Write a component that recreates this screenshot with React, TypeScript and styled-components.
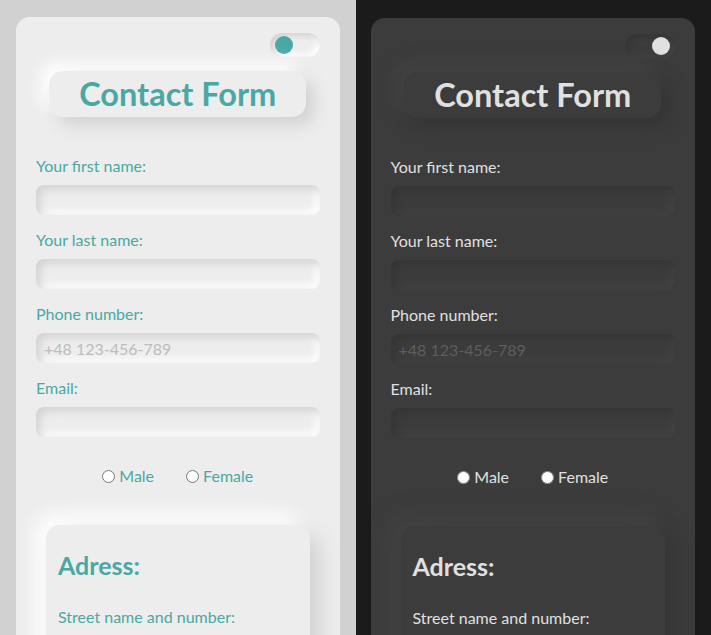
import React from 'react';
import styled, { createGlobalStyle, ThemeProvider } from 'styled-components';

type Theme = {
  page: string;
  card: string;
  text: string;
  shadowDark: string;
  shadowLight: string;
  placeholder: string;
  knob: string;
  on: boolean;
};

const light: Theme = {
  page: '#d1d1d1',
  card: '#ededed',
  text: '#4aa8a4',
  shadowDark: '#d2d2d2',
  shadowLight: '#ffffff',
  placeholder: '#bcbcbc',
  knob: '#4aa8a4',
  on: false,
};

const dark: Theme = {
  page: '#1b1b1b',
  card: '#3c3c3c',
  text: '#e0e0e0',
  shadowDark: '#353535',
  shadowLight: '#434343',
  placeholder: '#5e5e5e',
  knob: '#e0e0e0',
  on: true,
};

const Global = createGlobalStyle`
  html, body { margin: 0; padding: 0; }
  body { font-family: Lato, "Open Sans", sans-serif; }
  * { box-sizing: border-box; }
`;

const Page = styled.div`
  display: grid;
  grid-template-columns: 1fr 1fr;
  min-height: 100vh;
`;

const Half = styled.div`
  background: ${(p) => (p.theme as Theme).page};
  padding: ${(p) => ((p.theme as Theme).on ? '18px 16px 0 15px' : '17px 16px 0')};
`;

const Card = styled.div`
  background: ${(p) => (p.theme as Theme).card};
  border-radius: 14px;
  padding: 16px 20px 40px;
  display: flex;
  flex-direction: column;
`;

const Toggle = styled.div`
  align-self: flex-end;
  width: 50px;
  height: 24px;
  border-radius: 12px;
  padding: 0 5px;
  display: flex;
  align-items: center;
  justify-content: ${(p) => ((p.theme as Theme).on ? 'flex-end' : 'flex-start')};
  box-shadow: inset 3px 3px 6px ${(p) => (p.theme as Theme).shadowDark},
    inset -3px -3px 6px ${(p) => (p.theme as Theme).shadowLight};
`;

const Knob = styled.span`
  width: 18px;
  height: 18px;
  border-radius: 50%;
  background: ${(p) => (p.theme as Theme).knob};
`;

const TitleBox = styled.div`
  align-self: center;
  margin-top: 14px;
  height: 46px;
  padding: 0 30px;
  border-radius: 14px;
  box-shadow: 8px 8px 16px ${(p) => (p.theme as Theme).shadowDark},
    -8px -8px 16px ${(p) => (p.theme as Theme).shadowLight};
`;

const Title = styled.h1`
  margin: 0;
  font-size: 32.5px;
  line-height: 46px;
  font-weight: 700;
  color: ${(p) => (p.theme as Theme).text};
`;

const Fields = styled.div`
  margin-top: 40px;
  display: flex;
  flex-direction: column;
`;

const Label = styled.label`
  display: block;
  font-size: 16px;
  line-height: 18px;
  margin-bottom: 10px;
  color: ${(p) => (p.theme as Theme).text};
`;

const Input = styled.input`
  display: block;
  width: 100%;
  height: 30px;
  border: none;
  outline: none;
  border-radius: 8px;
  padding: 0 8px;
  margin: 0 0 16px;
  font-family: Lato, sans-serif;
  font-size: 16px;
  background: ${(p) => (p.theme as Theme).card};
  color: ${(p) => (p.theme as Theme).text};
  box-shadow: inset 4px 4px 8px ${(p) => (p.theme as Theme).shadowDark},
    inset -4px -4px 8px ${(p) => (p.theme as Theme).shadowLight};
  &::placeholder {
    color: ${(p) => (p.theme as Theme).placeholder};
  }
`;

const RadioGroup = styled.div`
  margin-top: 14px;
  display: flex;
  justify-content: center;
  gap: 32px;
`;

const RadioLabel = styled.label`
  display: flex;
  align-items: center;
  font-size: 16px;
  line-height: 18px;
  color: ${(p) => (p.theme as Theme).text};
  input {
    margin: 0 4px 0 0;
    width: 13px;
    height: 13px;
  }
`;

const Address = styled.div`
  margin: 40px 10px 0;
  padding: 14px 12px 30px;
  border-radius: 14px;
  box-shadow: 10px 10px 20px ${(p) => (p.theme as Theme).shadowDark},
    -10px -10px 20px ${(p) => (p.theme as Theme).shadowLight};
`;

const SubTitle = styled.h2`
  margin: 12px 0 28px;
  font-size: 25px;
  line-height: 29px;
  font-weight: 700;
  color: ${(p) => (p.theme as Theme).text};
`;

const FormSide: React.FC<{ id: string }> = ({ id }) => (
  <Half>
    <Card>
      <Toggle>
        <Knob />
      </Toggle>
      <TitleBox>
        <Title>Contact Form</Title>
      </TitleBox>
      <Fields>
        <Label htmlFor={`${id}-first`}>Your first name:</Label>
        <Input id={`${id}-first`} type="text" />
        <Label htmlFor={`${id}-last`}>Your last name:</Label>
        <Input id={`${id}-last`} type="text" />
        <Label htmlFor={`${id}-phone`}>Phone number:</Label>
        <Input id={`${id}-phone`} type="tel" placeholder="+48 123-456-789" />
        <Label htmlFor={`${id}-email`}>Email:</Label>
        <Input id={`${id}-email`} type="email" />
      </Fields>
      <RadioGroup>
        <RadioLabel>
          <input type="radio" name={`${id}-gender`} />
          Male
        </RadioLabel>
        <RadioLabel>
          <input type="radio" name={`${id}-gender`} />
          Female
        </RadioLabel>
      </RadioGroup>
      <Address>
        <SubTitle>Adress:</SubTitle>
        <Label htmlFor={`${id}-street`}>Street name and number:</Label>
        <Input id={`${id}-street`} type="text" />
        <Label htmlFor={`${id}-city`}>City:</Label>
        <Input id={`${id}-city`} type="text" />
      </Address>
    </Card>
  </Half>
);

export default function App() {
  return (
    <>
      <Global />
      <Page>
        <ThemeProvider theme={light}>
          <FormSide id="l" />
        </ThemeProvider>
        <ThemeProvider theme={dark}>
          <FormSide id="d" />
        </ThemeProvider>
      </Page>
    </>
  );
}
